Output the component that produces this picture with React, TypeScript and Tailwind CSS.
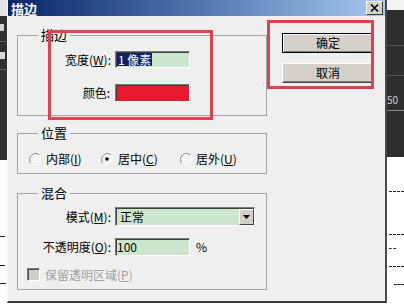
import React from 'react';

const sunken = 'border border-t-[#7a7a7a] border-l-[#7a7a7a] border-r-[#ffffff] border-b-[#ffffff] shadow-[inset_1px_1px_0_#404040]';

function Radio({ checked }: { checked?: boolean }) {
  return (
    <svg width="12" height="12" viewBox="0 0 12 12" className="shrink-0">
      <path d="M10.2 1.8 A6 6 0 0 0 1.8 10.2" fill="none" stroke="#8a8a8a" strokeWidth="1" />
      <path d="M1.8 10.2 A6 6 0 0 0 10.2 1.8" fill="none" stroke="#ffffff" strokeWidth="1" />
      <circle cx="6" cy="6" r="4.6" fill="#f4f4f4" />
      {checked && <circle cx="6" cy="6" r="1.8" fill="#000" />}
    </svg>
  );
}

function Group({ title, className, children }: { title: string; className?: string; children: React.ReactNode }) {
  return (
    <fieldset className={`border border-[#a3a3a3] ${className ?? ''}`}>
      <legend className="ml-[20px] px-[3px] text-[13px] leading-[14px]">{title}</legend>
      {children}
    </fieldset>
  );
}

export default function App() {
  return (
    <div className="flex h-[305px] w-[404px] items-start overflow-hidden bg-white font-['Noto_Sans_CJK_SC','Noto_Sans',sans-serif] text-[12px] text-black">
      {/* background app, left edge */}
      <div className="flex h-full w-[7px] shrink-0 flex-col">
        <div className="h-[16px] bg-[#e4e4e4]" />
        <div className="flex h-[144px] flex-col gap-[10px] bg-[#2f2f2f] pt-[8px]">
          <div className="h-[7px] w-[4px] bg-[#cfcfcf]" />
          <div className="h-[1px] bg-[#5a5a5a]" />
          <div className="h-[7px] w-[5px] bg-[#d8d8d8]" />
          <div className="h-[1px] bg-[#5a5a5a]" />
        </div>
        <div className="flex flex-1 flex-col bg-white pt-[76px]">
          <div className="h-[1px] w-[5px] bg-[#222]" />
          <div className="mt-[28px] h-[1px] w-[5px] bg-[#222]" />
          <div className="mt-[17px] h-[1px] w-[6px] bg-[#222]" />
        </div>
      </div>

      {/* dialog */}
      <div className="relative flex h-[303px] w-[380px] shrink-0 flex-col border-b-2 border-r-2 border-l border-b-[#3a3a3a] border-r-[#4a4a4a] border-l-[#f8f8f8] bg-[#efefef]">
        {/* title bar */}
        <div className="flex h-[16px] items-center justify-between bg-gradient-to-r from-[#0a246a] to-[#a6caf0] pl-[3px] pr-[2px]">
          <span className="text-[13px] font-bold leading-none text-white">描边</span>
          <button className="flex h-[14px] w-[17px] items-center justify-center border border-t-white border-l-white border-r-[#404040] border-b-[#404040] bg-[#d4d0c8]">
            <svg width="9" height="8" viewBox="0 0 9 8">
              <path d="M1 0.5 L8 7.5 M8 0.5 L1 7.5" stroke="#000" strokeWidth="1.6" />
            </svg>
          </button>
        </div>

        {/* body */}
        <div className="flex pl-[9px] pt-[12px]">
          <div className="flex w-[250px] flex-col">
            <Group title="描边" className="pb-[13px] pt-[9px]">
              <div className="flex h-[17px] items-center">
                <span className="w-[94px] pr-[1px] text-right">宽度(<u>W</u>):</span>
                <div className={`ml-[3px] flex h-[17px] w-[75px] items-center bg-[#cde7cf] pl-[1px] ${sunken}`}>
                  <span className="bg-[#0a246a] px-[1px] leading-[13px] text-white">1 像素</span>
                </div>
              </div>
              <div className="mt-[16px] flex h-[18px] items-center">
                <span className="w-[94px] pr-[2px] text-right">颜色:</span>
                <div className={`ml-[3px] h-[18px] w-[75px] bg-[#e8192c] ${sunken}`} />
              </div>
            </Group>

            <Group title="位置" className="mt-[10px] pb-[7px] pt-[12px]">
              <div className="flex h-[14px] items-center">
                <label className="ml-[11px] flex w-[72px] items-center gap-[5px]">
                  <Radio />
                  <span>内部(<u>I</u>)</span>
                </label>
                <label className="flex w-[79px] items-center gap-[5px]">
                  <Radio checked />
                  <span>居中(<u>C</u>)</span>
                </label>
                <label className="flex items-center gap-[4px]">
                  <Radio />
                  <span>居外(<u>U</u>)</span>
                </label>
              </div>
            </Group>

            <Group title="混合" className="mt-[12px] pb-[8px] pt-[7px]">
              <div className="flex h-[19px] items-center">
                <span className="w-[94px] pr-[1px] text-right">模式(<u>M</u>):</span>
                <div className={`ml-[3px] flex h-[19px] w-[140px] items-center justify-between bg-[#cde7cf] pl-[4px] ${sunken}`}>
                  <span>正常</span>
                  <div className="flex h-[16px] w-[15px] items-center justify-center border border-t-white border-l-white border-r-[#404040] border-b-[#404040] bg-[#d4d0c8]">
                    <svg width="7" height="4" viewBox="0 0 7 4">
                      <path d="M0 0 H7 L3.5 4 Z" fill="#000" />
                    </svg>
                  </div>
                </div>
              </div>
              <div className="mt-[12px] flex h-[18px] items-center">
                <span className="w-[94px] pr-[1px] text-right">不透明度(<u>O</u>):</span>
                <div className={`ml-[3px] flex h-[18px] w-[75px] items-center bg-[#cde7cf] pl-[1px] ${sunken}`}>
                  <span>100</span>
                </div>
                <span className="ml-[6px]">%</span>
              </div>
              <div className="mt-[12px] flex h-[13px] items-center">
                <div className="ml-[9px] h-[13px] w-[13px] border border-t-[#7a7a7a] border-l-[#7a7a7a] border-r-white border-b-white bg-[#d0cec8] shadow-[inset_1px_1px_0_#505050]" />
                <span className="ml-[5px] text-[#a0a0a0]">保留透明区域(<u>P</u>)</span>
              </div>
            </Group>
          </div>

          {/* buttons */}
          <div className="ml-[15px] mt-[5px] flex w-[92px] flex-col gap-[10px]">
            <button className="h-[20px] border border-black bg-[#d4d0c8] shadow-[inset_1px_1px_0_#ffffff,inset_-1px_-1px_0_#808080] leading-none">
              确定
            </button>
            <button className="h-[20px] border border-t-white border-l-white border-r-[#404040] border-b-[#404040] bg-[#d4d0c8] shadow-[inset_-1px_-1px_0_#808080] leading-none">
              取消
            </button>
          </div>
        </div>

        {/* red annotation boxes */}
        <div className="absolute left-[40px] top-[30px] h-[90px] w-[165px] border-[3px] border-[#e3404e]" />
        <div className="absolute left-[259px] top-[20px] h-[69px] w-[107px] border-[3px] border-[#e3404e]" />
      </div>

      {/* background app, right edge */}
      <div className="flex h-full flex-1 flex-col">
        <div className="h-[10px] bg-[#f2f2f2]" />
        <div className="flex h-[147px] flex-col bg-[#2e2e2e]">
          <div className="mt-[35px] h-[1px] bg-[#555]" />
          <div className="mt-[29px] h-[1px] bg-[#555]" />
          <span className="mt-[18px] text-[10px] leading-[12px] text-[#cfcfcf]">50</span>
          <div className="mt-[4px] h-[1px] bg-[#8a8a8a]" />
        </div>
        <div className="flex flex-1 flex-col bg-white pl-[2px] pt-[34px]">
          <div className="h-[1px] w-[15px] border-t border-dashed border-[#222]" />
          <div className="mt-[42px] h-[1px] w-[15px] border-t border-dashed border-[#222]" />
          <div className="mt-[13px] h-[1px] w-[7px] border-t border-dashed border-[#222]" />
          <div className="mt-[17px] h-[1px] w-[15px] border-t border-dashed border-[#222]" />
          <div className="ml-[5px] mt-[17px] h-[1px] w-[10px] border-t border-dashed border-[#222]" />
        </div>
      </div>
    </div>
  );
}
